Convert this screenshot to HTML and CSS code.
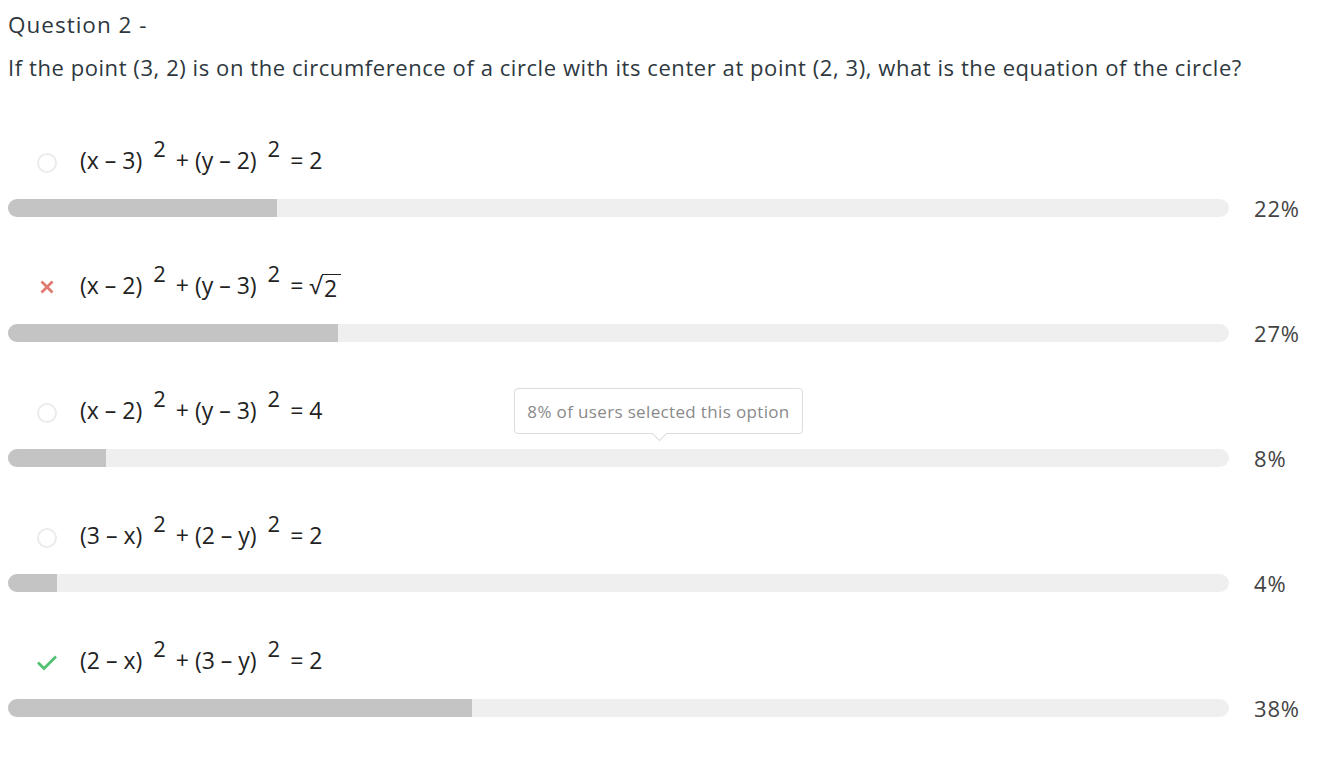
FILE: index.html
```html
<!DOCTYPE html>
<html>
<head>
<meta charset="utf-8">
<link rel="stylesheet" href="styles.css">
</head>
<body>
<div class="page">
  <h2 class="title">Question 2 -</h2>
  <p class="question">If the point (3, 2) is on the circumference of a circle with its center at point (2, 3), what is the equation of the circle?</p>
  <div class="options">
    <div class="option">
      <div class="opt-line">
        <span class="icon"><span class="radio"></span></span>
        <span class="eq">(x – 3)<sup>2</sup> + (y – 2)<sup>2</sup> = 2</span>
      </div>
      <div class="bar-row">
        <div class="bar"><div class="fill" style="width:22%"></div></div>
        <span class="pct">22%</span>
      </div>
    </div>
    <div class="option">
      <div class="opt-line">
        <span class="icon"><svg width="16" height="16" viewBox="0 0 16 16"><path d="M2.5 2.5 L13.5 13.5 M13.5 2.5 L2.5 13.5" stroke="#e07a70" stroke-width="2.8"/></svg></span>
        <span class="eq">(x – 2)<sup>2</sup> + (y – 3)<sup>2</sup> = <span class="sqrt"><span class="rad">√</span><span class="radicand">2</span></span></span>
      </div>
      <div class="bar-row">
        <div class="bar"><div class="fill" style="width:27%"></div></div>
        <span class="pct">27%</span>
      </div>
    </div>
    <div class="option">
      <div class="opt-line">
        <span class="icon"><span class="radio"></span></span>
        <span class="eq">(x – 2)<sup>2</sup> + (y – 3)<sup>2</sup> = 4</span>
        <div class="tooltip">8% of users selected this option</div>
      </div>
      <div class="bar-row">
        <div class="bar"><div class="fill" style="width:8%"></div></div>
        <span class="pct">8%</span>
      </div>
    </div>
    <div class="option">
      <div class="opt-line">
        <span class="icon"><span class="radio"></span></span>
        <span class="eq">(3 – x)<sup>2</sup> + (2 – y)<sup>2</sup> = 2</span>
      </div>
      <div class="bar-row">
        <div class="bar"><div class="fill" style="width:4%"></div></div>
        <span class="pct">4%</span>
      </div>
    </div>
    <div class="option">
      <div class="opt-line">
        <span class="icon"><svg width="22" height="18" viewBox="0 0 22 18"><path d="M2 9.5 L8 15.5 L20 3.5" fill="none" stroke="#52c172" stroke-width="2.8"/></svg></span>
        <span class="eq">(2 – x)<sup>2</sup> + (3 – y)<sup>2</sup> = 2</span>
      </div>
      <div class="bar-row">
        <div class="bar"><div class="fill" style="width:38%"></div></div>
        <span class="pct">38%</span>
      </div>
    </div>
  </div>
</div>
</body>
</html>
```
FILE: styles.css
```css
* { box-sizing: border-box; }
html, body { margin: 0; padding: 0; background: #fff; }
body { font-family: "Open Sans", "Liberation Sans", sans-serif; color: #2e383e; }
.page { padding: 10px 8px 0 8px; }
.title { margin: 0; font-size: 22.5px; line-height: 30px; font-weight: 400; color: #2e383e; letter-spacing: 1px; }
.question { margin: 12px 0 0 0; font-size: 22px; line-height: 30px; color: #2e383e; letter-spacing: 0.57px; white-space: nowrap; }
.options { margin-top: 58px; display: flex; flex-direction: column; gap: 42px; }
.option { display: flex; flex-direction: column; gap: 13px; }
.opt-line { position: relative; display: flex; align-items: center; height: 40px; }
.icon { width: 72px; display: flex; justify-content: center; padding-left: 6px; align-items: center; height: 40px; }
.radio { width: 20px; height: 20px; border-radius: 50%; border: 2px solid #ebebeb; background: #fff; margin-top: 6px; }
.icon svg { margin-top: 4px; }
.eq { font-family: "Open Sans", "DejaVu Sans", sans-serif; font-size: 23px; color: #222; white-space: nowrap; }
.eq sup { font-size: 22px; vertical-align: 0; position: relative; top: -12px; margin-left: 11px; margin-right: 4px; line-height: 0; }
.sqrt { display: inline-flex; align-items: flex-end; }
.rad { font-size: 23px; }
.radicand { border-top: 1.5px solid #222; line-height: 26px; padding: 0 4px 0 2px; }
.bar-row { display: flex; align-items: center; height: 30px; }
.bar { width: 1221px; height: 18px; background: #efefef; border-radius: 9px; overflow: hidden; }
.fill { height: 100%; background: #c4c4c4; }
.pct { margin-left: 25px; font-size: 22px; color: #444; letter-spacing: 0.8px; }
.tooltip { position: absolute; left: 506px; top: -2px; width: 289px; height: 46px; border: 1px solid #dcdcdc; border-radius: 4px; background: #fff; font-size: 17px; color: #8a8a8a; letter-spacing: 0.35px; display: flex; align-items: center; justify-content: center; }
.tooltip::after { content: ""; position: absolute; left: 139px; bottom: -6px; width: 10px; height: 10px; background: #fff; border-right: 1px solid #dcdcdc; border-bottom: 1px solid #dcdcdc; transform: rotate(45deg); }
```
